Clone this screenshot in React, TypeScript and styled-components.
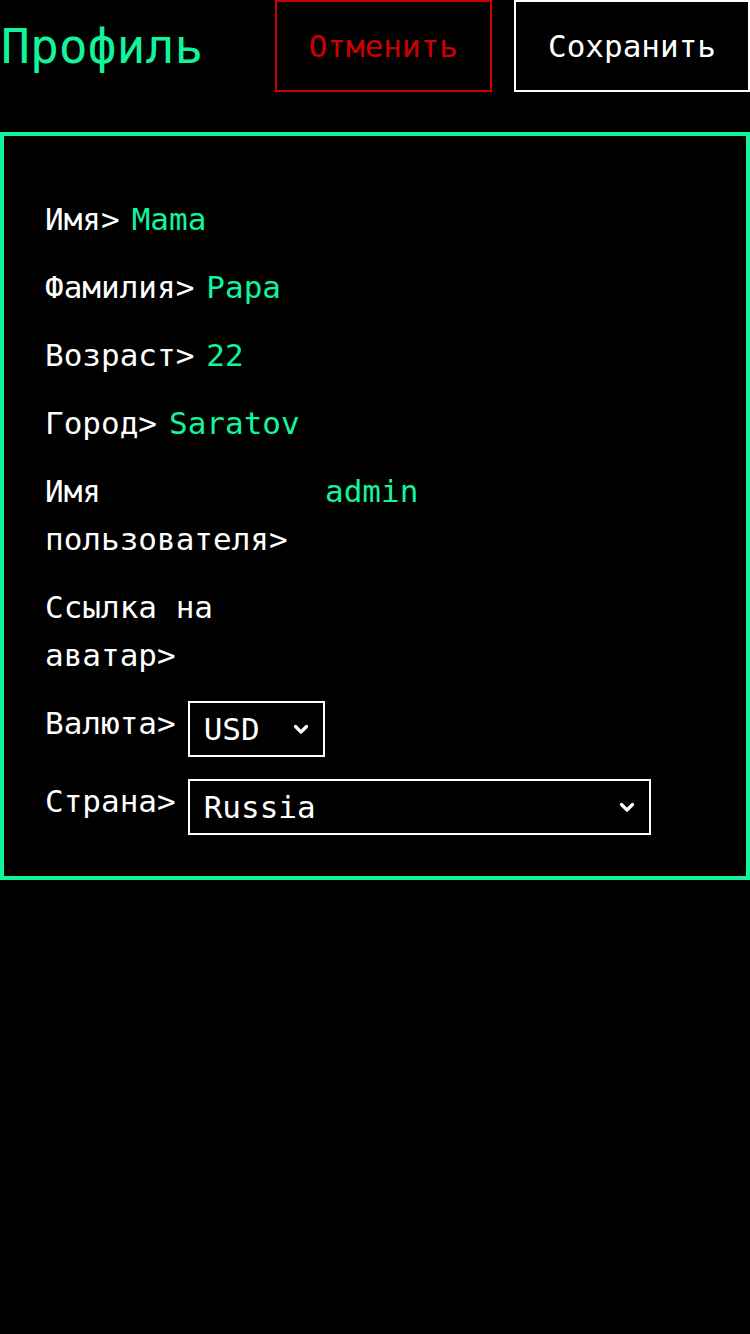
import styled, { createGlobalStyle } from "styled-components";

const GREEN = "#12f59c";
const FONT = `"DejaVu Sans Mono", "Liberation Mono", monospace`;

const GlobalStyle = createGlobalStyle`
  html, body {
    margin: 0;
    padding: 0;
    background: #000;
    min-height: 100%;
  }
  body {
    font-family: ${FONT};
    color: #fff;
  }
  * {
    box-sizing: border-box;
  }
`;

type Field = { label: string; value: string; wrap?: boolean };

const fields: Field[] = [
  { label: "Имя>", value: "Mama" },
  { label: "Фамилия>", value: "Papa" },
  { label: "Возраст>", value: "22" },
  { label: "Город>", value: "Saratov" },
  { label: "Имя пользователя>", value: "admin", wrap: true },
  { label: "Ссылка на аватар>", value: "", wrap: true },
];

function Chevron() {
  return (
    <svg width="16" height="11" viewBox="0 0 16 11" fill="none">
      <path
        d="M2.5 2.5L8 8L13.5 2.5"
        stroke="#fff"
        strokeWidth="3.2"
        strokeLinecap="round"
        strokeLinejoin="round"
      />
    </svg>
  );
}

export default function App() {
  return (
    <Page>
      <GlobalStyle />
      <Header>
        <Title>Профиль</Title>
        <Actions>
          <Button $variant="cancel">Отменить</Button>
          <Button $variant="save">Сохранить</Button>
        </Actions>
      </Header>

      <Card>
        {fields.map((f) => (
          <Row key={f.label}>
            <Label $wrap={f.wrap}>{f.label}</Label>
            <Value>{f.value}</Value>
          </Row>
        ))}

        <Row>
          <Label>Валюта&gt;</Label>
          <SelectBox $width={137}>
            <SelectText>USD</SelectText>
            <Chevron />
          </SelectBox>
        </Row>

        <Row>
          <Label>Страна&gt;</Label>
          <SelectBox $width={463}>
            <SelectText>Russia</SelectText>
            <Chevron />
          </SelectBox>
        </Row>
      </Card>
    </Page>
  );
}

const Page = styled.div`
  width: 750px;
  min-height: 1334px;
  background: #000;
`;

const Header = styled.header`
  display: flex;
  justify-content: space-between;
  align-items: center;
  margin-bottom: 40px;
`;

const Title = styled.h1`
  margin: 0 0 0 1px;
  font-size: 48px;
  font-weight: 400;
  line-height: 56px;
  color: ${GREEN};
`;

const Actions = styled.div`
  display: flex;
  gap: 22px;
`;

const Button = styled.button<{ $variant: "cancel" | "save" }>`
  font-family: ${FONT};
  font-size: 31px;
  line-height: 48px;
  height: 92px;
  padding: 20px 32px;
  background: transparent;
  border: 2px solid ${(p) => (p.$variant === "cancel" ? "#cc0000" : "#fff")};
  color: ${(p) => (p.$variant === "cancel" ? "#cc0000" : "#fff")};
  cursor: pointer;
`;

const Card = styled.section`
  display: flex;
  flex-direction: column;
  gap: 20px;
  border: 4px solid ${GREEN};
  padding: 59px 41px 41px;
`;

const Row = styled.div`
  display: flex;
  align-items: flex-start;
  gap: 12px;
  font-size: 31px;
  line-height: 48px;
`;

const Label = styled.span<{ $wrap?: boolean }>`
  color: #fff;
  white-space: ${(p) => (p.$wrap ? "normal" : "nowrap")};
  width: ${(p) => (p.$wrap ? "268px" : "auto")};
  flex-shrink: 0;
`;

const Value = styled.span`
  color: ${GREEN};
`;

const SelectBox = styled.div<{ $width: number }>`
  display: flex;
  align-items: center;
  justify-content: space-between;
  width: ${(p) => p.$width}px;
  height: 56px;
  margin-top: 2px;
  padding: 0 14px 0 14px;
  border: 2px solid #fff;
  color: #fff;
`;

const SelectText = styled.span`
  font-size: 31px;
  line-height: 52px;
`;
